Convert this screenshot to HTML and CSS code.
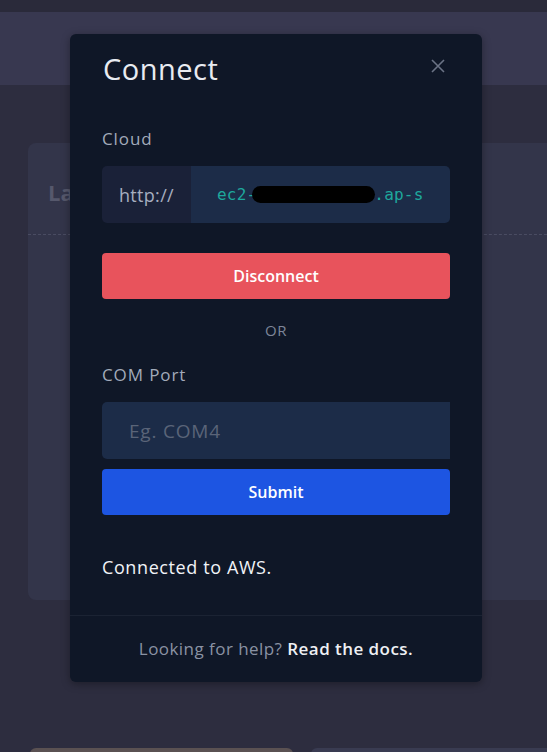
FILE: index.html
```html
<!DOCTYPE html>
<html>
<head>
<meta charset="utf-8">
<link rel="stylesheet" href="styles.css">
</head>
<body>
<div class="topbar"></div>
<div class="header"></div>
<main class="main">
  <section class="card">
    <div class="card-head">La</div>
  </section>
  <div class="bottom-row">
    <div class="bottom-a"></div>
    <div class="bottom-b"></div>
  </div>
</main>

<div class="modal">
  <div class="modal-head">
    <h1 class="modal-title">Connect</h1>
    <button class="close" aria-label="Close">
      <svg width="14" height="14" viewBox="0 0 14 14"><path d="M1 1L13 13M13 1L1 13" stroke="#6b7385" stroke-width="1.6" fill="none"/></svg>
    </button>
  </div>
  <div class="modal-body">
    <label class="label label-cloud">Cloud</label>
    <div class="group">
      <span class="addon">http://</span>
      <span class="url"><span class="url-text"><span class="seg">ec2-</span><span class="redact"></span><span class="seg">.ap-s</span></span></span>
    </div>
    <button class="btn btn-red">Disconnect</button>
    <div class="or">OR</div>
    <label class="label label-com">COM Port</label>
    <div class="com-input">Eg. COM4</div>
    <button class="btn btn-blue">Submit</button>
    <p class="status">Connected to AWS.</p>
  </div>
  <div class="modal-foot">
    <span class="muted">Looking for help?</span> <span class="strong">Read the docs.</span>
  </div>
</div>
</body>
</html>
```

FILE: styles.css
```css
* { box-sizing: border-box; }
html, body { margin: 0; padding: 0; }
body {
  background: #2d2d3f;
  font-family: "Open Sans", Lato, sans-serif;
  width: 547px;
  height: 752px;
  overflow: hidden;
  position: relative;
}
.topbar { height: 12px; background: #2a2a3a; }
.header { height: 73px; background: #383850; }
.main { padding: 58px 0 0 28px; }
.card {
  height: 457px;
  background: #33354a;
  border-radius: 8px 0 0 8px;
}
.card-head {
  height: 92px;
  border-bottom: 1px dashed #4a4c62;
  padding: 34px 0 0 20px;
  font-size: 22px;
  font-weight: 700;
  color: #56586c;
}
.bottom-row {
  margin-top: 148px;
  display: flex;
  gap: 18px;
}
.bottom-a { width: 263px; height: 10px; background: #5a5152; border-radius: 6px 6px 0 0; margin-left: 2px; }
.bottom-b { flex: 1; height: 10px; background: #393b51; border-radius: 6px 0 0 0; }

.modal {
  position: absolute;
  left: 70px;
  top: 34px;
  width: 412px;
  height: 648px;
  background: #0f1727;
  border-radius: 6px;
  box-shadow: 0 2px 8px rgba(0,0,0,0.35);
  display: flex;
  flex-direction: column;
}
.modal-head {
  display: flex;
  justify-content: space-between;
  align-items: flex-start;
  padding: 15px 32px 0 33px;
}
.modal-title {
  margin: 0;
  font-size: 29px;
  line-height: 40px;
  font-weight: 400;
  color: #e8ebf1;
  letter-spacing: 0.5px;
}
.close {
  background: none;
  border: 0;
  padding: 0;
  margin: 10px 5px 0 0;
  width: 14px;
  height: 14px;
  display: flex;
}
.modal-body {
  padding: 0 32px;
  display: flex;
  flex-direction: column;
}
.label {
  font-size: 17px;
  line-height: 24px;
  color: #a2aaba;
  letter-spacing: 0.9px;
}
.label-cloud { margin-top: 38px; }
.label-com { margin-top: 21px; }
.group {
  margin-top: 15px;
  height: 57px;
  display: flex;
  border-radius: 5px;
  overflow: hidden;
}
.addon {
  width: 89px;
  flex-shrink: 0;
  background: #1a2138;
  color: #a6aec0;
  font-size: 18px;
  display: flex;
  align-items: center;
  justify-content: center;
  letter-spacing: 0.3px;
}
.url {
  flex: 1;
  background: #1c2c48;
  display: flex;
  align-items: center;
  padding: 0 27px 0 26px;
  overflow: hidden;
}
.url-text {
  display: flex;
  align-items: center;
  white-space: nowrap;
  color: #1ea89c;
  font-family: "DejaVu Sans Mono", monospace;
  font-size: 16px;
  letter-spacing: 0.2px;
}
.seg { flex-shrink: 0; }
.redact {
  flex-shrink: 0;
  display: block;
  width: 123px;
  height: 17px;
  background: #000;
  border-radius: 9px;
  margin: 0 -1px 0 -4px;
}
.btn {
  border: 0;
  border-radius: 4px;
  height: 46px;
  color: #fff;
  font-family: "Open Sans", Lato, sans-serif;
  font-size: 16px;
  font-weight: 600;
  letter-spacing: 0;
  width: 100%;
}
.btn-red { margin-top: 30px; background: #e8535c; }
.btn-blue { margin-top: 10px; background: #1d55e2; }
.or {
  margin-top: 19px;
  text-align: center;
  font-size: 15px;
  line-height: 24px;
  color: #7d8598;
  letter-spacing: 0.5px;
}
.com-input {
  margin-top: 15px;
  height: 57px;
  background: #1c2c48;
  border-radius: 5px 0 0 5px;
  color: #5a6478;
  font-size: 19px;
  display: flex;
  align-items: center;
  padding-left: 27px;
  letter-spacing: 0.8px;
}
.status {
  margin: 40px 0 0;
  font-size: 18px;
  line-height: 24px;
  font-weight: 500;
  color: #f1f3f7;
  letter-spacing: 0.6px;
}
.modal-foot {
  margin-top: auto;
  border-top: 1px solid #1b2333;
  height: 67px;
  padding-top: 21px;
  text-align: center;
  font-size: 17px;
  line-height: 24px;
  letter-spacing: 0.45px;
}
.muted { color: #8a92a3; }
.strong { color: #eef0f4; font-weight: 600; }
```
